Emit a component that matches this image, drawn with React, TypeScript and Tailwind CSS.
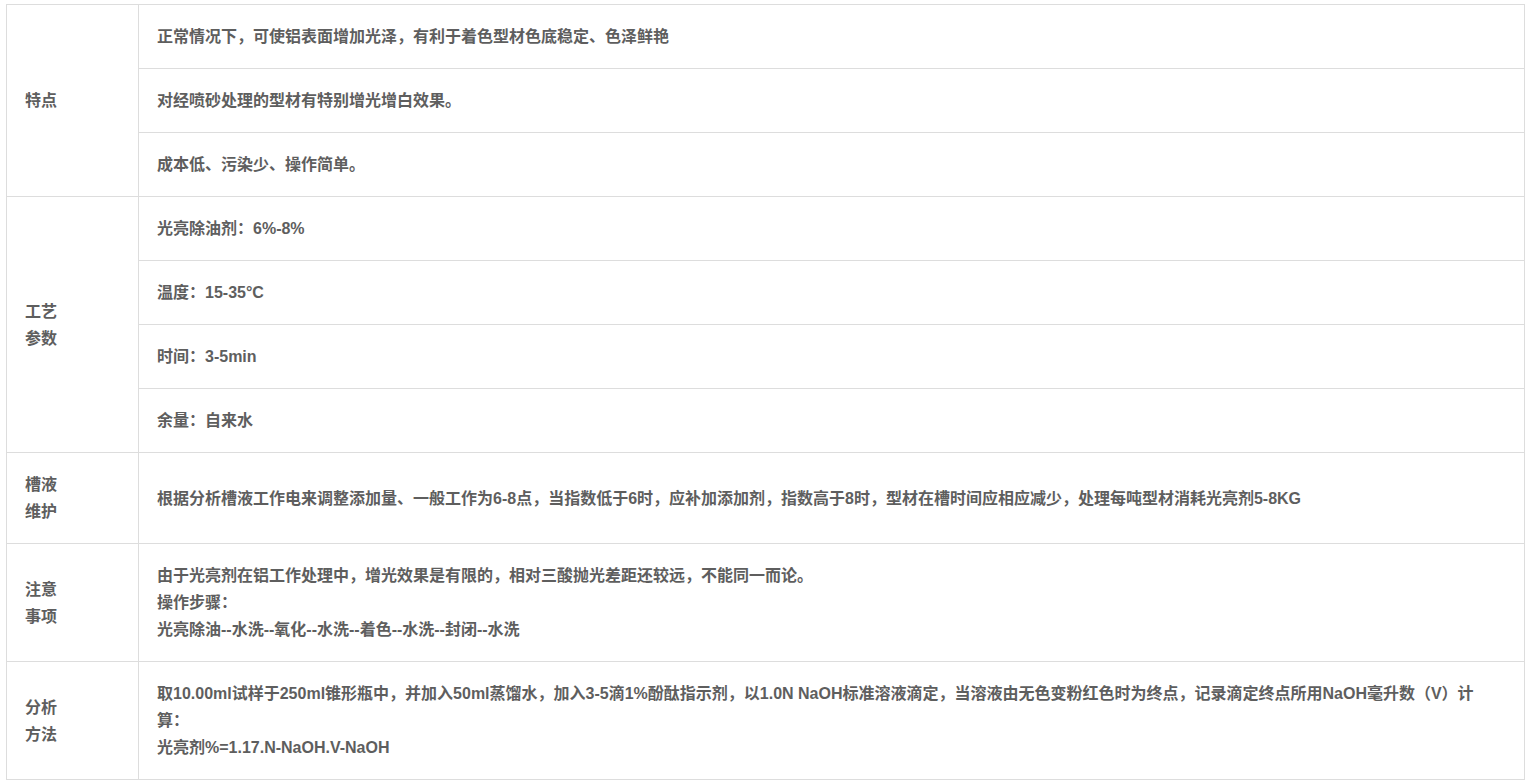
import React from "react";

const cellL =
  "border border-[#dddddd] px-[18px] py-[18px] align-middle text-left";
const cellR =
  "border border-[#dddddd] px-[18px] py-[18px] align-middle text-left";

export default function App() {
  return (
    <div className="bg-white w-[1531px] h-[783px] pt-[4px] pl-[6px]">
      <table
        className="border-collapse w-[1519px] text-[16px] leading-[27px] font-bold text-[#5e5e5e]"
        style={{ fontFamily: '"Liberation Sans", "Noto Sans CJK SC", sans-serif' }}
      >
        <colgroup>
          <col className="w-[132px]" />
          <col />
        </colgroup>
        <tbody>
          <tr>
            <td rowSpan={3} className={cellL}>特点</td>
            <td className={cellR}>正常情况下，可使铝表面增加光泽，有利于着色型材色底稳定、色泽鲜艳</td>
          </tr>
          <tr>
            <td className={cellR}>对经喷砂处理的型材有特别增光增白效果。</td>
          </tr>
          <tr>
            <td className={cellR}>成本低、污染少、操作简单。</td>
          </tr>
          <tr>
            <td rowSpan={4} className={cellL}>工艺<br />参数</td>
            <td className={cellR}>光亮除油剂：6%-8%</td>
          </tr>
          <tr>
            <td className={cellR}>温度：15-35°C</td>
          </tr>
          <tr>
            <td className={cellR}>时间：3-5min</td>
          </tr>
          <tr>
            <td className={cellR}>余量：自来水</td>
          </tr>
          <tr>
            <td className={cellL}>槽液<br />维护</td>
            <td className={cellR}>根据分析槽液工作电来调整添加量、一般工作为6-8点，当指数低于6时，应补加添加剂，指数高于8时，型材在槽时间应相应减少，处理每吨型材消耗光亮剂5-8KG</td>
          </tr>
          <tr>
            <td className={cellL}>注意<br />事项</td>
            <td className={cellR}>
              由于光亮剂在铝工作处理中，增光效果是有限的，相对三酸抛光差距还较远，不能同一而论。<br />
              操作步骤：<br />
              光亮除油--水洗--氧化--水洗--着色--水洗--封闭--水洗
            </td>
          </tr>
          <tr>
            <td className={cellL}>分析<br />方法</td>
            <td className={cellR}>
              取10.00ml试样于250ml锥形瓶中，并加入50ml蒸馏水，加入3-5滴1%酚酞指示剂，以1.0N NaOH标准溶液滴定，当溶液由无色变粉红色时为终点，记录滴定终点所用NaOH毫升数（V）计<br />
              算：<br />
              光亮剂%=1.17.N-NaOH.V-NaOH
            </td>
          </tr>
        </tbody>
      </table>
    </div>
  );
}
